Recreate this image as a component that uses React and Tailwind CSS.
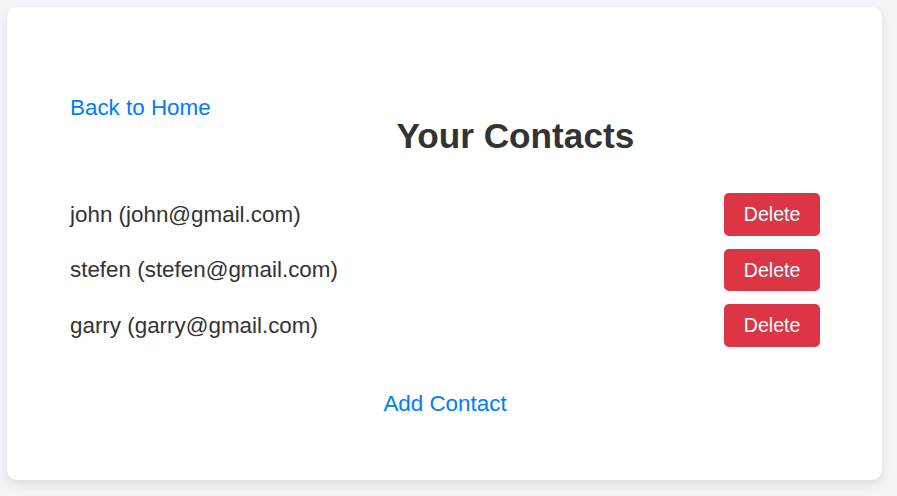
const contacts = [
  { id: 1, name: 'john', email: 'john@gmail.com' },
  { id: 2, name: 'stefen', email: 'stefen@gmail.com' },
  { id: 3, name: 'garry', email: 'garry@gmail.com' },
];

export default function App() {
  return (
    <div className="min-h-screen bg-[#f4f4f9] pl-[7px] pt-[7px] font-['Liberation_Sans',Arial,sans-serif] text-[22.4px] text-[#333]">
      <div className="w-[875px] h-[473px] bg-white rounded-[10px] shadow-[0_4px_10px_rgba(0,0,0,0.1)] pt-[87.7px] pl-[63px] pr-[62px]">
        <div className="flex items-start">
          <a href="#" className="text-[#007bff] leading-[25.7px]">
            Back to Home
          </a>
          <h2 className="flex-1 text-center mt-[21.7px] text-[35.2px] leading-[40.4px] font-bold text-[#333]">
            Your Contacts
          </h2>
        </div>

        <ul className="mt-[36.5px] flex flex-col gap-[13.1px]">
          {contacts.map((c) => (
            <li key={c.id} className="flex items-center justify-between h-[42.4px]">
              <span className="leading-[25.7px]">
                {c.name} ({c.email})
              </span>
              <button className="bg-[#dc3545] text-white text-[19.6px] leading-[22.5px] px-[19.6px] py-[9.9px] rounded-[5px]">
                Delete
              </button>
            </li>
          ))}
        </ul>

        <div className="mt-[44.7px] text-center leading-[25.7px]">
          <a href="#" className="text-[#007bff]">
            Add Contact
          </a>
        </div>
      </div>
    </div>
  );
}
